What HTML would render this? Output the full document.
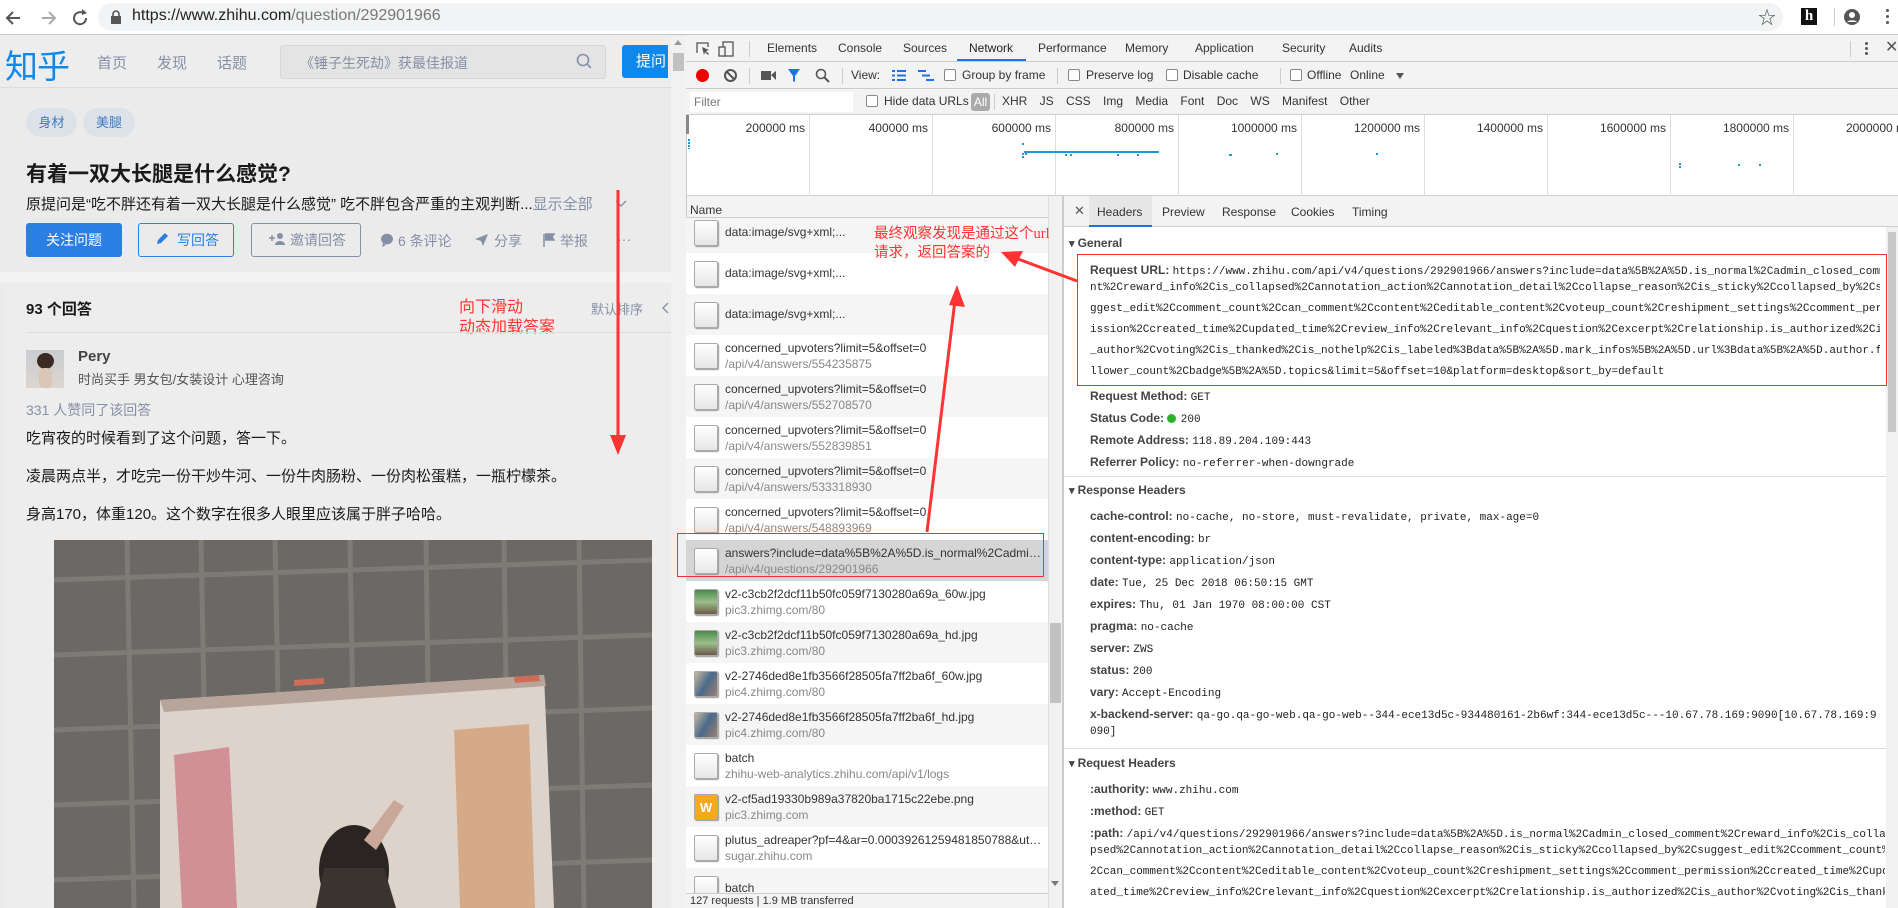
<!DOCTYPE html>
<html><head><meta charset="utf-8">
<style>
*{margin:0;padding:0;box-sizing:border-box}
body{width:1898px;height:908px;overflow:hidden;position:relative;background:#ebebeb;font-family:"Liberation Sans","Noto Sans CJK SC",sans-serif;}
.a{position:absolute;white-space:nowrap}
.cn{font-family:"Liberation Sans","Noto Sans CJK SC",sans-serif}
.mono{font-family:"Liberation Mono",monospace;font-size:11px;color:#222}
.dt{font-size:12px;color:#333}
.row{position:absolute;left:686px;width:362px;height:41px;overflow:hidden}
.row .ic{position:absolute;left:8px;top:8px;width:24px;height:26px;border:1px solid #aaa;border-radius:2px;background:linear-gradient(#fff,#e6e6e6);box-shadow:1px 1px 1px #999}
.row .t1{position:absolute;left:39px;top:6px;font-size:12px;color:#333;white-space:nowrap;width:320px;overflow:hidden;text-overflow:ellipsis}
.row .t2{position:absolute;left:39px;top:22px;font-size:12px;color:#888;white-space:nowrap}
.k{font-weight:bold;color:#444;font-size:12px;font-family:"Liberation Sans",sans-serif}
.hl{position:absolute;left:1090px;white-space:nowrap;overflow:hidden;width:800px}
</style></head><body>

<div class="a" style="left:0;top:0;width:1898px;height:35px;background:#fff;border-bottom:1px solid #c8c8c8"></div>
<svg class="a" style="left:4px;top:7px" width="90" height="22" viewBox="0 0 90 22">
<path d="M16 11H4M9 5l-6 6 6 6" stroke="#555" stroke-width="2" fill="none"/>
<path d="M38 11h12M45 5l6 6-6 6" stroke="#aaa" stroke-width="2" fill="none"/>
<path d="M79 6a6 6 0 1 0 3 5" stroke="#555" stroke-width="2" fill="none"/><path d="M78 2l5 4-5 2z" fill="#555"/>
</svg>
<div class="a" style="left:98px;top:3px;width:1685px;height:28px;background:#f1f3f4;border-radius:14px"></div>
<svg class="a" style="left:110px;top:10px" width="12" height="14"><rect x="1" y="6" width="10" height="8" fill="#555"/><path d="M3 7V4a3 3 0 0 1 6 0v3" stroke="#555" stroke-width="1.6" fill="none"/></svg>
<div class="a" style="left:132px;top:7px;font-size:16px;color:#222">https://www.zhihu.com<span style="color:#777">/question/292901966</span></div>
<div class="a" style="left:1758px;top:4px;font-size:18px;color:#555">☆</div>
<div class="a" style="left:1801px;top:8px;width:16px;height:17px;background:#111;color:#fff;font:bold 15px 'Liberation Serif',serif;text-align:center;line-height:17px">h</div>
<div class="a" style="left:1834px;top:8px;width:1px;height:18px;background:#ccc"></div>
<svg class="a" style="left:1843px;top:8px" width="18" height="18"><circle cx="9" cy="9" r="8" fill="#555"/><circle cx="9" cy="7" r="3" fill="#fff"/><path d="M4 14a6 4 0 0 1 10 0" fill="#fff"/></svg>
<div class="a" style="left:1886px;top:9px;width:3px;height:3px;background:#555;border-radius:2px;box-shadow:0 6px #555,0 12px #555"></div>

<div class="a" style="left:0;top:36px;width:671px;height:52px;background:#ededed;border-bottom:1px solid #ddd"></div>
<div class="a cn" style="left:5px;top:40px;font-size:33px;color:#0f88eb;letter-spacing:-1px">知乎</div>
<div class="a cn" style="left:97px;top:52px;font-size:15px;color:#8590a6">首页</div>
<div class="a cn" style="left:157px;top:52px;font-size:15px;color:#8590a6">发现</div>
<div class="a cn" style="left:217px;top:52px;font-size:15px;color:#8590a6">话题</div>
<div class="a" style="left:280px;top:45px;width:326px;height:34px;background:#e4e4e4;border:1px solid #d6d6d6;border-radius:3px"></div>
<div class="a cn" style="left:300px;top:53px;font-size:14px;color:#8590a6">《锤子生死劫》获最佳报道</div>
<svg class="a" style="left:576px;top:53px" width="16" height="16"><circle cx="7" cy="7" r="5.5" stroke="#8590a6" stroke-width="1.6" fill="none"/><path d="M11 11l4 4" stroke="#8590a6" stroke-width="1.6"/></svg>
<div class="a cn" style="left:622px;top:45px;width:46px;height:33px;background:#0f88eb;border-radius:3px 0 0 3px;color:#fff;font-size:15px;line-height:33px;padding-left:14px;overflow:hidden">提问</div>
<div class="a" style="left:671px;top:36px;width:15px;height:872px;background:#f1f1f1"></div>
<div class="a" style="left:673px;top:53px;width:11px;height:18px;background:#c1c1c1"></div>
<div class="a" style="left:674px;top:40px;width:0;height:0;border:4px solid transparent;border-bottom:5px solid #999;border-top:0"></div>

<div class="a cn" style="left:26px;top:108px;width:51px;height:29px;background:#dde2e9;border-radius:15px;color:#3e7ac2;font-size:13px;text-align:center;line-height:29px">身材</div>
<div class="a cn" style="left:83px;top:108px;width:52px;height:29px;background:#dde2e9;border-radius:15px;color:#3e7ac2;font-size:13px;text-align:center;line-height:29px">美腿</div>
<div class="a cn" style="left:26px;top:158px;font-size:21px;font-weight:bold;color:#1a1a1a">有着一双大长腿是什么感觉?</div>
<div class="a cn" style="left:26px;top:193px;font-size:15px;color:#1a1a1a">原提问是“吃不胖还有着一双大长腿是什么感觉” 吃不胖包含严重的主观判断...<span style="color:#8590a6">显示全部</span></div>
<svg class="a" style="left:615px;top:199px" width="12" height="10"><path d="M1 2l5 5 5-5" stroke="#8590a6" stroke-width="1.4" fill="none"/></svg>

<div class="a cn" style="left:26px;top:223px;width:96px;height:34px;background:#2b7fe3;border-radius:3px;color:#fff;font-size:14px;text-align:center;line-height:34px">关注问题</div>
<div class="a cn" style="left:138px;top:223px;width:96px;height:34px;border:1px solid #2b7fe3;border-radius:3px;color:#2b7fe3;font-size:14px;line-height:32px;padding-left:38px">写回答</div>
<svg class="a" style="left:155px;top:232px" width="14" height="14"><path d="M2 12l1-4 7-7 3 3-7 7z" fill="#2b7fe3"/></svg>
<div class="a cn" style="left:251px;top:223px;width:110px;height:34px;border:1px solid #8590a6;border-radius:3px;color:#8590a6;font-size:14px;line-height:32px;padding-left:38px">邀请回答</div>
<svg class="a" style="left:268px;top:232px" width="18" height="14"><path d="M1 6h6M4 3v6" stroke="#8590a6" stroke-width="1.5"/><circle cx="12" cy="4" r="3" fill="#8590a6"/><path d="M7 13a5 4 0 0 1 10 0z" fill="#8590a6"/></svg>
<svg class="a" style="left:380px;top:233px" width="14" height="14"><ellipse cx="7" cy="6" rx="6" ry="5.3" fill="#8590a6"/><path d="M3 10l-1 4 4-2z" fill="#8590a6"/></svg>
<div class="a cn" style="left:398px;top:231px;font-size:14px;color:#8590a6">6 条评论</div>
<svg class="a" style="left:474px;top:233px" width="15" height="14"><path d="M1 6L14 1 9 13 7 8z" fill="#8590a6"/></svg>
<div class="a cn" style="left:494px;top:231px;font-size:14px;color:#8590a6">分享</div>
<svg class="a" style="left:543px;top:233px" width="12" height="14"><path d="M1 1v13M2 1h9l-2 3 2 3H2" fill="#8590a6" stroke="#8590a6" stroke-width="1.5"/></svg>
<div class="a cn" style="left:560px;top:231px;font-size:14px;color:#8590a6">举报</div>
<div class="a" style="left:617px;top:231px;font-size:14px;color:#8590a6">···</div>

<div class="a" style="left:0;top:272px;width:671px;height:11px;background:#f3f3f3"></div>
<div class="a" style="left:5px;top:283px;width:666px;height:625px;background:#ededed"></div>
<div class="a cn" style="left:26px;top:298px;font-size:15px;font-weight:bold;color:#1a1a1a">93 个回答</div>
<div class="a cn" style="left:591px;top:299px;font-size:13px;color:#8590a6">默认排序</div>
<svg class="a" style="left:660px;top:302px" width="10" height="12"><path d="M8 1L3 6l5 5" stroke="#8590a6" stroke-width="1.4" fill="none"/></svg>
<div class="a cn" style="left:459px;top:298px;font-size:16px;color:#f33;line-height:20px">向下滑动<br>动态加载答案</div>
<div class="a" style="left:26px;top:332px;width:645px;height:1px;background:#dedede"></div>
<div class="a" style="left:26px;top:350px;width:38px;height:38px;background:linear-gradient(#c9ccd0,#dcd6cf);overflow:hidden"><div style="position:absolute;left:11px;top:3px;width:17px;height:16px;border-radius:50%;background:#3a2a22"></div><div style="position:absolute;left:13px;top:18px;width:13px;height:20px;background:#d9c6b5;border-radius:5px"></div></div>
<div class="a" style="left:78px;top:348px;font-size:15px;font-weight:bold;color:#444">Pery</div>
<div class="a cn" style="left:78px;top:369px;font-size:13px;color:#555">时尚买手 男女包/女装设计 心理咨询</div>
<div class="a cn" style="left:26px;top:400px;font-size:14px;color:#8590a6">331 人赞同了该回答</div>
<div class="a cn" style="left:26px;top:427px;font-size:15px;color:#1a1a1a">吃宵夜的时候看到了这个问题，答一下。</div>
<div class="a cn" style="left:26px;top:465px;font-size:15px;color:#1a1a1a">凌晨两点半，才吃完一份干炒牛河、一份牛肉肠粉、一份肉松蛋糕，一瓶柠檬茶。</div>
<div class="a cn" style="left:26px;top:503px;font-size:15px;color:#1a1a1a">身高170，体重120。这个数字在很多人眼里应该属于胖子哈哈。</div>
<div class="a" style="left:54px;top:540px;width:598px;height:368px;background:#6c6865;overflow:hidden">
<svg width="598" height="368" style="position:absolute;left:0;top:0">
<g stroke="#7e7a76" stroke-width="5" fill="none">
<path d="M73 0L80 368M147 0L154 368M221 0L228 368M296 0L302 368M372 0L377 368M450 0L455 368M525 0L530 368"/>
<path d="M0 40L598 20M0 115L598 95M0 190L598 168M0 265L598 245M0 340L598 320"/>
</g>
<path d="M106 160L490 135 500 368 106 368z" fill="#ddd3ca"/>
<path d="M106 160L490 135 492 146 110 172z" fill="#b7a49a"/>
<path d="M240 140l30-2 0 6-30 2z M460 137l25-2 1 6-25 2z" fill="#d06b5a"/>
<path d="M120 215l55-8 8 161-55 0z" fill="#c55a6a" opacity=".55"/>
<path d="M400 190l75-6 6 184-75 0z" fill="#d0905e" opacity=".6"/>
<ellipse cx="300" cy="330" rx="35" ry="45" fill="#2a2523"/>
<path d="M262 368l8-40 60 0 12 40z" fill="#3b3330"/>
<path d="M310 300l30-40 10 6-28 44z" fill="#c9a89a"/>
</svg></div>
<svg class="a" style="left:600px;top:185px" width="40" height="275"><path d="M18 5V252" stroke="#f33" stroke-width="3"/><path d="M10 250h16l-8 20z" fill="#f33"/></svg>

<div class="a" style="left:686px;top:35px;width:1212px;height:873px;background:#fff;border-left:1px solid #ccc"></div>
<div class="a" style="left:686px;top:35px;width:1212px;height:27px;background:#f3f3f3;border-bottom:1px solid #ccc"></div>
<svg class="a" style="left:695px;top:41px" width="52" height="16"><path d="M2 12V2h11v4" stroke="#555" stroke-width="1.3" fill="none"/><path d="M7 6l7 3-3 1 3 3-1 1-3-3-1 3z" fill="#555"/><rect x="28" y="1" width="10" height="14" stroke="#555" stroke-width="1.3" fill="none"/><rect x="24" y="6" width="6" height="9" stroke="#555" stroke-width="1.3" fill="#f3f3f3"/></svg>
<div class="a" style="left:749px;top:41px;width:1px;height:16px;background:#ccc"></div>
<div class="a dt" style="left:767px;top:41px">Elements</div>
<div class="a dt" style="left:838px;top:41px">Console</div>
<div class="a dt" style="left:903px;top:41px">Sources</div>
<div class="a dt" style="left:969px;top:41px;color:#222">Network</div>
<div class="a" style="left:957px;top:59px;width:69px;height:2px;background:#1a73e8"></div>
<div class="a dt" style="left:1038px;top:41px">Performance</div>
<div class="a dt" style="left:1125px;top:41px">Memory</div>
<div class="a dt" style="left:1195px;top:41px">Application</div>
<div class="a dt" style="left:1282px;top:41px">Security</div>
<div class="a dt" style="left:1349px;top:41px">Audits</div>
<div class="a" style="left:1850px;top:41px;width:1px;height:16px;background:#ccc"></div>
<div class="a" style="left:1865px;top:42px;width:3px;height:3px;background:#555;border-radius:2px;box-shadow:0 5px #555,0 10px #555"></div>
<div class="a" style="left:1885px;top:37px;font-size:16px;color:#555">✕</div>

<div class="a" style="left:686px;top:62px;width:1212px;height:27px;background:#f3f3f3;border-bottom:1px solid #ccc"></div>
<div class="a" style="left:696px;top:69px;width:13px;height:13px;border-radius:50%;background:#e00"></div>
<svg class="a" style="left:723px;top:68px" width="15" height="15"><circle cx="7.5" cy="7.5" r="5.5" stroke="#555" stroke-width="2" fill="none"/><path d="M4 4l7 7" stroke="#555" stroke-width="2"/></svg>
<div class="a" style="left:749px;top:68px;width:1px;height:16px;background:#ccc"></div>
<svg class="a" style="left:761px;top:70px" width="15" height="11"><rect x="0" y="1" width="10" height="9" fill="#555"/><path d="M10 5l5-4v9z" fill="#555"/></svg>
<svg class="a" style="left:787px;top:68px" width="14" height="15"><path d="M1 1h12L8 8v6L6 13V8z" fill="#1a73e8"/></svg>
<svg class="a" style="left:815px;top:68px" width="15" height="15"><circle cx="6" cy="6" r="4.5" stroke="#555" stroke-width="1.6" fill="none"/><path d="M9 9l5 5" stroke="#555" stroke-width="2"/></svg>
<div class="a" style="left:842px;top:68px;width:1px;height:16px;background:#ccc"></div>
<div class="a dt" style="left:851px;top:68px">View:</div>
<svg class="a" style="left:892px;top:69px" width="14" height="13"><path d="M0 1h3v2H0zM5 1h9v2H5zM0 5.5h3v2H0zM5 5.5h9v2H5zM0 10h3v2H0zM5 10h9v2H5z" fill="#1a73e8"/></svg>
<svg class="a" style="left:918px;top:69px" width="16" height="13"><path d="M0 1h8v2H0zM4 5.5h8v2H4zM8 10h8v2H8z" fill="#1a73e8"/></svg>
<div class="a" style="left:944px;top:69px;width:12px;height:12px;border:1px solid #888;border-radius:2px;background:#fff"></div>
<div class="a dt" style="left:962px;top:68px">Group by frame</div>
<div class="a" style="left:1057px;top:68px;width:1px;height:16px;background:#ccc"></div>
<div class="a" style="left:1068px;top:69px;width:12px;height:12px;border:1px solid #888;border-radius:2px;background:#fff"></div>
<div class="a dt" style="left:1086px;top:68px">Preserve log</div>
<div class="a" style="left:1166px;top:69px;width:12px;height:12px;border:1px solid #888;border-radius:2px;background:#fff"></div>
<div class="a dt" style="left:1183px;top:68px">Disable cache</div>
<div class="a" style="left:1280px;top:68px;width:1px;height:16px;background:#ccc"></div>
<div class="a" style="left:1290px;top:69px;width:12px;height:12px;border:1px solid #888;border-radius:2px;background:#fff"></div>
<div class="a dt" style="left:1307px;top:68px">Offline</div>
<div class="a dt" style="left:1350px;top:68px">Online</div>
<div class="a" style="left:1396px;top:73px;border:4px solid transparent;border-top:6px solid #555;border-bottom:0"></div>

<div class="a" style="left:686px;top:89px;width:1212px;height:26px;background:#f3f3f3;border-bottom:1px solid #ccc"></div>
<div class="a" style="left:690px;top:92px;width:163px;height:20px;background:#fff"></div>
<div class="a" style="left:694px;top:95px;font-size:12px;color:#777">Filter</div>
<div class="a" style="left:866px;top:95px;width:12px;height:12px;border:1px solid #888;border-radius:2px;background:#fff"></div>
<div class="a dt" style="left:884px;top:94px">Hide data URLs</div>
<div class="a" style="left:971px;top:93px;width:19px;height:18px;background:#aaa;border-radius:3px;color:#fff;font-size:12px;text-align:center;line-height:18px">All</div>
<div class="a" style="left:994px;top:94px;width:1px;height:16px;background:#ccc"></div>
<div class="a dt" style="left:1002px;top:94px;word-spacing:9px">XHR JS CSS Img Media Font Doc WS Manifest Other</div>

<div class="a" style="left:687px;top:115px;width:1211px;height:81px;background:#fff;border-bottom:1px solid #ccc"></div>
<div class="a" style="left:686px;top:115px;width:3px;height:19px;background:#888"></div>
<div id="tl"></div>
<div class="a" style="left:1024px;top:151px;width:135px;height:2px;background:#1b9bd7"></div>
<div class="a" style="left:688px;top:139px;width:2px;height:10px;background:repeating-linear-gradient(#1b9bd7 0 2px,transparent 2px 3px)"></div>
<div class="a" style="left:1022px;top:143px;width:2px;height:2px;background:#1b9bd7;box-shadow:0 10px #1b9bd7,0 13px #1b9bd7,3px 10px #1b9bd7"></div>
<div class="a" style="left:1065px;top:154px;width:2px;height:2px;background:#1b9bd7;box-shadow:5px 0 #1b9bd7"></div>
<div class="a" style="left:1229px;top:154px;width:2px;height:2px;background:#1b9bd7;box-shadow:1px 0 #1b9bd7"></div>
<div class="a" style="left:1679px;top:163px;width:2px;height:2px;background:#1b9bd7;box-shadow:0 3px #1b9bd7,59px 1px #1b9bd7,80px 1px #1b9bd7"></div>
<div class="a" style="left:1117px;top:154px;width:2px;height:2px;background:#1b9bd7;box-shadow:20px 0 #1b9bd7"></div>
<div class="a" style="left:1276px;top:153px;width:2px;height:2px;background:#1b9bd7;box-shadow:100px 0 #1b9bd7"></div>

<div class="a" style="left:687px;top:196px;width:375px;height:22px;background:#f3f3f3;border-bottom:1px solid #ccc"></div>
<div class="a dt" style="left:690px;top:203px">Name</div>
<div class="a" style="left:1048px;top:196px;width:15px;height:712px;background:#f1f1f1;border-left:1px solid #ddd"></div>
<div class="a" style="left:1050px;top:623px;width:11px;height:80px;background:#c1c1c1"></div>
<div class="a" style="left:1051px;top:881px;border:4px solid transparent;border-top:5px solid #777;border-bottom:0"></div>
<div class="a" style="left:1062px;top:196px;width:2px;height:712px;background:#ccc"></div>

<div class="a" style="left:686px;top:218px;width:362px;height:675px;overflow:hidden">
<div id="rows" style="position:relative;top:-6px"></div>
</div>
<div class="a" style="left:686px;top:893px;width:362px;height:15px;background:#f3f3f3;border-top:1px solid #ccc"></div>
<div class="a" style="left:690px;top:895px;font-size:11px;color:#333">127 requests | 1.9 MB transferred</div>
<div class="a" style="left:677px;top:533px;width:367px;height:44px;border:1.5px solid #e33"></div>

<div class="a" style="left:1064px;top:196px;width:834px;height:31px;background:#f3f3f3;border-bottom:1px solid #ccc"></div>
<div class="a" style="left:1074px;top:203px;font-size:13px;color:#555">✕</div>
<div class="a" style="left:1089px;top:196px;width:63px;height:31px;background:#e6e6e6;border-bottom:2px solid #1a73e8"></div>
<div class="a dt" style="left:1097px;top:205px">Headers</div>
<div class="a dt" style="left:1162px;top:205px">Preview</div>
<div class="a dt" style="left:1222px;top:205px">Response</div>
<div class="a dt" style="left:1291px;top:205px">Cookies</div>
<div class="a dt" style="left:1352px;top:205px">Timing</div>
<div class="a" style="left:1886px;top:227px;width:12px;height:681px;background:#f1f1f1"></div>
<div class="a" style="left:1888px;top:232px;width:8px;height:200px;background:#c8c8c8"></div>

<div class="a k" style="left:1069px;top:236px;font-size:11px">▾ <span style="font-size:12px">General</span></div>
<div class="a" style="left:1077px;top:254px;width:810px;height:132px;border:1.5px solid #e33"></div>
<div class="hl" style="top:261px;width:790px"><span class="k">Request URL: </span><span class="mono">https://www.zhihu.com/api/v4/questions/292901966/answers?include=data%5B%2A%5D.is_normal%2Cadmin_closed_comme</span></div>
<div class="hl mono" style="top:282px;width:790px">nt%2Creward_info%2Cis_collapsed%2Cannotation_action%2Cannotation_detail%2Ccollapse_reason%2Cis_sticky%2Ccollapsed_by%2Csu</div>
<div class="hl mono" style="top:303px;width:790px">ggest_edit%2Ccomment_count%2Ccan_comment%2Ccontent%2Ceditable_content%2Cvoteup_count%2Creshipment_settings%2Ccomment_perm</div>
<div class="hl mono" style="top:324px;width:790px">ission%2Ccreated_time%2Cupdated_time%2Creview_info%2Crelevant_info%2Cquestion%2Cexcerpt%2Crelationship.is_authorized%2Cis</div>
<div class="hl mono" style="top:345px;width:790px">_author%2Cvoting%2Cis_thanked%2Cis_nothelp%2Cis_labeled%3Bdata%5B%2A%5D.mark_infos%5B%2A%5D.url%3Bdata%5B%2A%5D.author.fo</div>
<div class="hl mono" style="top:366px;width:790px">llower_count%2Cbadge%5B%2A%5D.topics&amp;limit=5&amp;offset=10&amp;platform=desktop&amp;sort_by=default</div>
<div class="hl" style="top:387px"><span class="k">Request Method: </span><span class="mono">GET</span></div>
<div class="hl" style="top:409px"><span class="k">Status Code: </span><span style="display:inline-block;width:9px;height:9px;border-radius:50%;background:#2ab32a;vertical-align:-1px"></span> <span class="mono">200</span></div>
<div class="hl" style="top:431px"><span class="k">Remote Address: </span><span class="mono">118.89.204.109:443</span></div>
<div class="hl" style="top:453px"><span class="k">Referrer Policy: </span><span class="mono">no-referrer-when-downgrade</span></div>
<div class="a" style="left:1064px;top:476px;width:822px;height:1px;background:#ddd"></div>
<div class="a k" style="left:1069px;top:483px;font-size:11px">▾ <span style="font-size:12px">Response Headers</span></div>
<div class="hl" style="top:507px"><span class="k">cache-control: </span><span class="mono">no-cache, no-store, must-revalidate, private, max-age=0</span></div>
<div class="hl" style="top:529px"><span class="k">content-encoding: </span><span class="mono">br</span></div>
<div class="hl" style="top:551px"><span class="k">content-type: </span><span class="mono">application/json</span></div>
<div class="hl" style="top:573px"><span class="k">date: </span><span class="mono">Tue, 25 Dec 2018 06:50:15 GMT</span></div>
<div class="hl" style="top:595px"><span class="k">expires: </span><span class="mono">Thu, 01 Jan 1970 08:00:00 CST</span></div>
<div class="hl" style="top:617px"><span class="k">pragma: </span><span class="mono">no-cache</span></div>
<div class="hl" style="top:639px"><span class="k">server: </span><span class="mono">ZWS</span></div>
<div class="hl" style="top:661px"><span class="k">status: </span><span class="mono">200</span></div>
<div class="hl" style="top:683px"><span class="k">vary: </span><span class="mono">Accept-Encoding</span></div>
<div class="hl" style="top:705px;width:795px"><span class="k">x-backend-server: </span><span class="mono">qa-go.qa-go-web.qa-go-web--344-ece13d5c-934480161-2b6wf:344-ece13d5c---10.67.78.169:9090[10.67.78.169:9</span></div>
<div class="hl mono" style="top:726px">090]</div>
<div class="a" style="left:1064px;top:748px;width:822px;height:1px;background:#ddd"></div>
<div class="a k" style="left:1069px;top:756px;font-size:11px">▾ <span style="font-size:12px">Request Headers</span></div>
<div class="hl" style="top:780px"><span class="k">:authority: </span><span class="mono">www.zhihu.com</span></div>
<div class="hl" style="top:802px"><span class="k">:method: </span><span class="mono">GET</span></div>
<div class="hl" style="top:824px;width:795px"><span class="k">:path: </span><span class="mono">/api/v4/questions/292901966/answers?include=data%5B%2A%5D.is_normal%2Cadmin_closed_comment%2Creward_info%2Cis_colla</span></div>
<div class="hl mono" style="top:845px;width:795px">psed%2Cannotation_action%2Cannotation_detail%2Ccollapse_reason%2Cis_sticky%2Ccollapsed_by%2Csuggest_edit%2Ccomment_count%</div>
<div class="hl mono" style="top:866px;width:795px">2Ccan_comment%2Ccontent%2Ceditable_content%2Cvoteup_count%2Creshipment_settings%2Ccomment_permission%2Ccreated_time%2Cupd</div>
<div class="hl mono" style="top:887px;width:795px">ated_time%2Creview_info%2Crelevant_info%2Cquestion%2Cexcerpt%2Crelationship.is_authorized%2Cis_author%2Cvoting%2Cis_thank</div>

<div class="a cn" style="left:874px;top:225px;font-size:14.5px;color:#f33;line-height:19px">最终观察发现是通过这个<span style="font-family:'Liberation Serif',serif">url</span><br>请求，返回答案的</div>
<svg class="a" style="left:900px;top:240px" width="190" height="300">
<path d="M27 292L55 60" stroke="#f33" stroke-width="3"/>
<path d="M57 45l8 22-16-2z" fill="#f33"/>
<path d="M177 41L110 16" stroke="#f33" stroke-width="3"/>
<path d="M101 12l22 -1-8 16z" fill="#f33"/>
</svg>

<script>
var tl=document.getElementById('tl'),h='';
for(var k=1;k<=10;k++){var x=809+123*(k-1);
h+='<div class="a" style="left:'+(x)+'px;top:115px;width:1px;height:81px;background:#ddd"></div>';
h+='<div class="a dt" style="left:'+(x-110)+'px;width:106px;text-align:right;top:121px">'+(k*200000)+' ms</div>';}
tl.innerHTML=h;
var R=[
['data:image/svg+xml;...',''],['data:image/svg+xml;...',''],['data:image/svg+xml;...',''],
['concerned_upvoters?limit=5&offset=0','/api/v4/answers/554235875'],
['concerned_upvoters?limit=5&offset=0','/api/v4/answers/552708570'],
['concerned_upvoters?limit=5&offset=0','/api/v4/answers/552839851'],
['concerned_upvoters?limit=5&offset=0','/api/v4/answers/533318930'],
['concerned_upvoters?limit=5&offset=0','/api/v4/answers/548893969'],
['answers?include=data%5B%2A%5D.is_normal%2Cadmin_cl...','/api/v4/questions/292901966','sel'],
['v2-c3cb2f2dcf11b50fc059f7130280a69a_60w.jpg','pic3.zhimg.com/80','img'],
['v2-c3cb2f2dcf11b50fc059f7130280a69a_hd.jpg','pic3.zhimg.com/80','img'],
['v2-2746ded8e1fb3566f28505fa7ff2ba6f_60w.jpg','pic4.zhimg.com/80','img2'],
['v2-2746ded8e1fb3566f28505fa7ff2ba6f_hd.jpg','pic4.zhimg.com/80','img2'],
['batch','zhihu-web-analytics.zhihu.com/api/v1/logs'],
['v2-cf5ad19330b989a37820ba1715c22ebe.png','pic3.zhimg.com','png'],
['plutus_adreaper?pf=4&ar=0.00039261259481850788&ut=...','sugar.zhihu.com'],
['batch','']];
h='';
for(var i=0;i<R.length;i++){var r=R[i],bg=r[2]=='sel'?'#d5d5d5':(i%2?'#fff':'#f5f5f5');
var ic='<div class="ic"></div>';
if(r[2]=='img')ic='<div class="ic" style="background:linear-gradient(#4a8a4a,#9bbf8a 50%,#6b5a4a)"></div>';
if(r[2]=='img2')ic='<div class="ic" style="background:linear-gradient(120deg,#c9b9a0,#4a6a8a 50%,#a08070)"></div>';
if(r[2]=='png')ic='<div class="ic" style="background:#f7a81b;color:#fff;font-size:13px;font-weight:bold;text-align:center;line-height:26px">W</div>';
var t1=r[0].replace(/&/g,'&amp;');
h+='<div class="row" style="left:0;top:'+(i*41)+'px;background:'+bg+'">'+ic+'<div class="t1"'+(r[1]?'':' style="top:13px"')+'>'+t1+'</div><div class="t2">'+r[1]+'</div></div>';}
document.getElementById('rows').innerHTML=h;
</script>
</body></html>
